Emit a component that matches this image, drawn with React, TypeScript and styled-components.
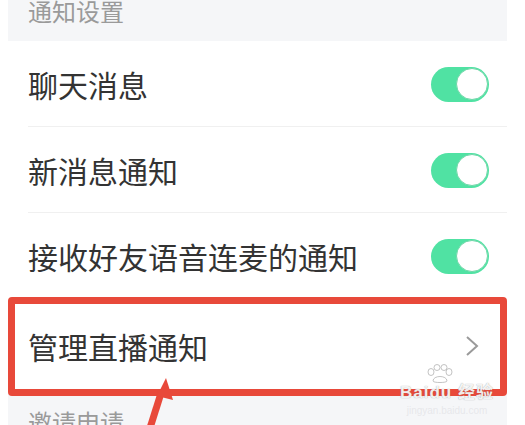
import React from 'react'
import styled, { createGlobalStyle } from 'styled-components'

const GlobalStyle = createGlobalStyle`
  body {
    margin: 0;
    background: #ffffff;
    font-family: 'Noto Sans CJK SC', 'Noto Sans', sans-serif;
    overflow: hidden;
  }
`

const Screen = styled.div`
  position: relative;
  width: 525px;
  height: 425px;
  overflow: hidden;
`

const Column = styled.div`
  width: 499px;
  margin-left: 8px;
  background: #f5f6f8;
`

const SectionTitle = styled.div<{ $top: number }>`
  height: ${({ $top }) => ($top > 0 ? 60 : 42)}px;
  box-sizing: border-box;
  padding: ${({ $top }) => $top}px 0 0 20px;
  font-size: 24px;
  line-height: 24px;
  color: #9a9a9a;
`

const List = styled.div`
  background: #ffffff;
`

const Row = styled.div<{ $height: number; $divider?: boolean }>`
  position: relative;
  height: ${({ $height }) => $height}px;
  display: flex;
  align-items: center;
  justify-content: space-between;
  padding: 0 18px 0 20px;

  &::after {
    content: '';
    display: ${({ $divider }) => ($divider ? 'block' : 'none')};
    position: absolute;
    left: 20px;
    right: 0;
    bottom: 0;
    height: 1px;
    background: #f0f0f0;
  }
`

const Label = styled.span`
  font-size: 30px;
  line-height: 32px;
  color: #333333;
`

const Toggle = styled.div`
  width: 58px;
  height: 35px;
  border-radius: 18px;
  background: #50e2a3;
  display: flex;
  align-items: center;
  justify-content: flex-end;
  padding-right: 1px;
  box-sizing: border-box;
`

const Knob = styled.div`
  width: 32px;
  height: 32px;
  border-radius: 50%;
  background: #ffffff;
  border: 1px solid #6fd7a8;
  box-sizing: border-box;
`

const Chevron = styled.svg`
  width: 14px;
  height: 22px;
  margin-right: 10px;
`

const Highlight = styled.div`
  position: absolute;
  left: 8px;
  top: 297px;
  width: 499px;
  height: 99px;
  box-sizing: border-box;
  border: 7px solid #e8493a;
  border-radius: 4px;
`

const Arrow = styled.svg`
  position: absolute;
  left: 140px;
  top: 370px;
  width: 45px;
  height: 55px;
`

const Watermark = styled.div`
  position: absolute;
  left: 400px;
  top: 364px;
  width: 94px;
  display: flex;
  flex-direction: column;
  align-items: center;
  color: rgba(255, 255, 255, 0.9);
  text-shadow: 0 0 1px rgba(110, 110, 110, 0.7);
  font-family: 'Liberation Sans', 'Noto Sans CJK SC', sans-serif;
`

const Paw = styled.svg`
  width: 26px;
  height: 20px;
  margin-left: -14px;
`

const MarkTitle = styled.div`
  font-size: 17px;
  font-weight: bold;
  line-height: 18px;
  letter-spacing: 1px;
`

const MarkUrl = styled.div`
  font-size: 10px;
  line-height: 14px;
  margin-top: 2px;
  color: rgba(230, 230, 234, 0.95);
  text-shadow: none;
`

const settings = ['聊天消息', '新消息通知', '接收好友语音连麦的通知']

export default function App() {
  return (
    <Screen>
      <GlobalStyle />
      <Column>
        <SectionTitle $top={0} style={{ marginTop: -1 }}>
          通知设置
        </SectionTitle>
        <List>
          {settings.map((label, i) => (
            <Row key={label} $height={86} $divider={i < settings.length - 1}>
              <Label>{label}</Label>
              <Toggle>
                <Knob />
              </Toggle>
            </Row>
          ))}
          <Row $height={93}>
            <Label>管理直播通知</Label>
            <Chevron viewBox="0 0 14 22">
              <path d="M2 2 L12 11 L2 20" fill="none" stroke="#9a9a9a" strokeWidth="2" />
            </Chevron>
          </Row>
        </List>
        <SectionTitle $top={18}>邀请申请</SectionTitle>
      </Column>

      <Highlight />
      <Arrow viewBox="0 0 45 55">
        <path d="M10 58 L22 20" stroke="#e8493a" strokeWidth="7" fill="none" />
        <polygon points="26,8 17,26 33,30" fill="#e8493a" />
      </Arrow>

      <Watermark>
        <Paw viewBox="0 0 26 20">
          <g fill="none" stroke="rgba(170,170,170,0.7)" strokeWidth="1">
            <ellipse cx="4" cy="8" rx="3" ry="3.5" />
            <ellipse cx="10" cy="3.5" rx="3" ry="3" />
            <ellipse cx="17" cy="3.5" rx="3" ry="3" />
            <ellipse cx="22" cy="8" rx="3" ry="3.5" />
            <path d="M6 17 C6 11 20 11 20 17 C20 19 6 19 6 17 Z" />
          </g>
        </Paw>
        <MarkTitle>Baidu 经验</MarkTitle>
        <MarkUrl>jingyan.baidu.com</MarkUrl>
      </Watermark>
    </Screen>
  )
}
